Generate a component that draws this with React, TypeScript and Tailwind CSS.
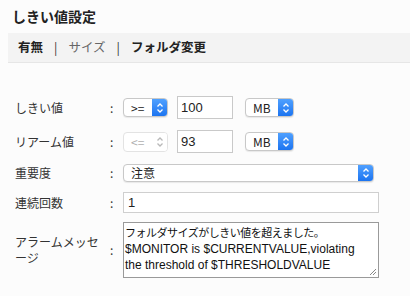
import { FC, ReactNode } from 'react'

const jp = { fontFamily: '"Noto Sans CJK JP", "Noto Sans", sans-serif' }
const latin = { fontFamily: '"Liberation Sans", "Noto Sans CJK JP", sans-serif' }

const Chevrons: FC<{ muted?: boolean }> = ({ muted }) => (
  <svg width="8" height="12" viewBox="0 0 8 12" fill="none">
    <path d="M1.5 4.5 L4 2 L6.5 4.5" stroke={muted ? '#b8b8b8' : '#fff'} strokeWidth="1.3" />
    <path d="M1.5 7.5 L4 10 L6.5 7.5" stroke={muted ? '#b8b8b8' : '#fff'} strokeWidth="1.3" />
  </svg>
)

const FakeSelect: FC<{ value: string; width: string; disabled?: boolean }> = ({ value, width, disabled }) => (
  <div
    className={`flex h-full shrink-0 items-stretch overflow-hidden rounded-[4px] border ${disabled ? 'border-[#e3e3e3] bg-white' : 'border-[#c8c8c8] bg-white shadow-[0_1px_1px_rgba(0,0,0,0.08)]'} ${width}`}
  >
    <span
      className={`flex flex-1 items-center pl-[7px] text-[12px] ${disabled ? 'text-[#b0b0b0]' : 'text-[#222]'}`}
      style={jp}
    >
      {value}
    </span>
    <span
      className={`flex w-[15px] items-center justify-center ${disabled ? 'bg-white' : 'bg-gradient-to-b from-[#4fa0ff] to-[#1b74f0]'}`}
    >
      <Chevrons muted={disabled} />
    </span>
  </div>
)

const Row: FC<{ label: ReactNode; className: string; children: ReactNode }> = ({ label, className, children }) => (
  <div className={`flex items-center ${className}`}>
    <div className="w-[110px] shrink-0 pl-[15px] text-[12px] leading-[16px] text-[#333]" style={jp}>
      {label}
    </div>
    <div className="w-[13px] shrink-0 text-[12px] text-[#333]" style={jp}>:</div>
    <div className="flex h-full items-center">{children}</div>
  </div>
)

const App: FC = () => {
  return (
    <div className="h-[296px] w-[410px] overflow-hidden bg-[#fcfcfc]">
      <h1 className="pl-[12px] pt-[6px] text-[14px] font-bold leading-[20px] text-[#222]" style={jp}>
        しきい値設定
      </h1>
      <div className="ml-[8px] mt-[7px] flex h-[30px] items-center border-b border-[#e6e6e6] bg-[#f3f3f3] pl-[10px] text-[12.5px]" style={jp}>
        <span className="font-bold text-[#222]">有無</span>
        <span className="mx-[11px] text-[#333]">|</span>
        <span className="text-[#666]">サイズ</span>
        <span className="mx-[11px] text-[#333]">|</span>
        <span className="font-bold text-[#222]">フォルダ変更</span>
      </div>

      <Row label="しきい値" className="mt-[33px] h-[23px]">
        <div className="h-[19px]"><FakeSelect value=">=" width="w-[45px]" /></div>
        <div className="ml-[9px] flex h-[23px] w-[56px] shrink-0 items-center border border-[#c9c9c9] bg-white pl-[3px] text-[13px] text-[#222]" style={latin}>100</div>
        <div className="ml-[12px] h-[19px]"><FakeSelect value="MB" width="w-[49px]" /></div>
      </Row>

      <Row label="リアーム値" className="mt-[11px] h-[23px]">
        <div className="h-[20px]"><FakeSelect value="<=" width="w-[45px]" disabled /></div>
        <div className="ml-[9px] flex h-[23px] w-[56px] shrink-0 items-center border border-[#c9c9c9] bg-white pl-[3px] text-[13px] text-[#222]" style={latin}>93</div>
        <div className="ml-[12px] h-[19px]"><FakeSelect value="MB" width="w-[49px]" /></div>
      </Row>

      <Row label="重要度" className="mt-[11px] h-[18px]">
        <div className="h-[18px]"><FakeSelect value="注意" width="w-[251px]" /></div>
      </Row>

      <Row label="連続回数" className="mt-[10px] h-[21px]">
        <div className="flex h-[21px] w-[256px] shrink-0 items-center border border-[#cfcfcf] bg-white pl-[4px] text-[13px] text-[#222]" style={latin}>1</div>
      </Row>

      <Row label={<>アラームメッセ<br />ージ</>} className="mt-[9px] h-[56px]">
        <div className="relative h-[56px] w-[256px] shrink-0 overflow-hidden border border-[#9a9a9a] bg-white pl-[1px] pt-[1px] text-[#111]">
          <div className="whitespace-nowrap text-[11px] leading-[16.5px] tracking-[-0.5px]" style={jp}>
            フォルダサイズがしきい値を超えました。
          </div>
          <div className="whitespace-nowrap text-[12px] leading-[16.5px]" style={latin}>
            $MONITOR is $CURRENTVALUE,violating<br />
            the threshold of $THRESHOLDVALUE<br />
            $UNITS
          </div>
          <svg className="absolute bottom-[1px] right-[1px]" width="8" height="8" viewBox="0 0 8 8">
            <path d="M1 7 L7 1 M4 7 L7 4" stroke="#888" strokeWidth="1" />
          </svg>
        </div>
      </Row>
    </div>
  )
}

export default App
